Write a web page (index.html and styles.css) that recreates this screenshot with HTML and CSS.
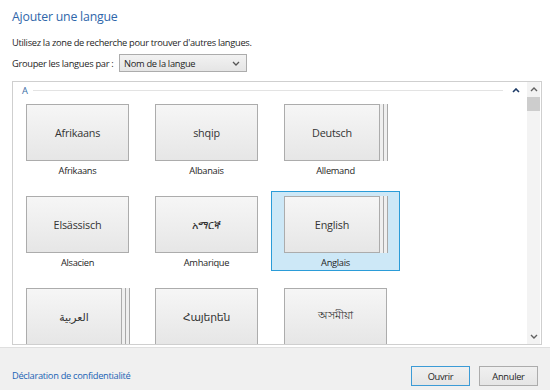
FILE: index.html
```html
<!DOCTYPE html>
<html lang="fr">
  <head>
    <meta charset="UTF-8" />
    <title>Ajouter une langue</title>
    <link rel="stylesheet" href="styles.css">
  </head>
  <body>
    <div class="dialog">
      <h1 class="title">Ajouter une langue</h1>
      <p class="hint">Utilisez la zone de recherche pour trouver d'autres langues.</p>

      <div class="group-by">
        <span class="group-label">Grouper les langues par :</span>
        <div class="select">
          <span>Nom de la langue</span>
          <svg width="8" height="5" viewBox="0 0 8 5"><path d="M1 1 L4 4 L7 1" fill="none" stroke="#555" stroke-width="1.3"/></svg>
        </div>
      </div>

      <div class="list">
        <div class="list-body">
          <div class="group-head">
            <span class="group-letter">A</span>
            <span class="rule"></span>
            <svg class="collapse" width="8" height="5" viewBox="0 0 8 5"><path d="M1 4 L4 1 L7 4" fill="none" stroke="#1c3a66" stroke-width="1.6"/></svg>
          </div>

          <div class="grid">
            <div class="cell">
              <div class="tile">Afrikaans</div>
              <div class="name">Afrikaans</div>
            </div>
            <div class="cell">
              <div class="tile">shqip</div>
              <div class="name">Albanais</div>
            </div>
            <div class="cell">
              <div class="tile stacked">Deutsch</div>
              <div class="name">Allemand</div>
            </div>
            <div class="cell">
              <div class="tile">Elsässisch</div>
              <div class="name">Alsacien</div>
            </div>
            <div class="cell">
              <div class="tile">አማርኛ</div>
              <div class="name">Amharique</div>
            </div>
            <div class="cell selected">
              <div class="tile stacked">English</div>
              <div class="name">Anglais</div>
            </div>
            <div class="cell">
              <div class="tile stacked">العربية</div>
            </div>
            <div class="cell">
              <div class="tile">Հայերեն</div>
            </div>
            <div class="cell">
              <div class="tile">অসমীয়া</div>
            </div>
          </div>
        </div>

        <div class="scrollbar">
          <svg width="8" height="5" viewBox="0 0 8 5"><path d="M1 4 L4 1 L7 4" fill="none" stroke="#606060" stroke-width="1.4"/></svg>
          <div class="thumb"></div>
          <div class="track"></div>
          <svg width="8" height="5" viewBox="0 0 8 5"><path d="M1 1 L4 4 L7 1" fill="none" stroke="#606060" stroke-width="1.4"/></svg>
        </div>
      </div>
    </div>

    <div class="footer">
      <a class="privacy" href="#">Déclaration de confidentialité</a>
      <div class="buttons">
        <button class="btn default">Ouvrir</button>
        <button class="btn">Annuler</button>
      </div>
    </div>
  </body>
</html>
```

FILE: styles.css
```css
* {
  box-sizing: border-box;
}
body {
  margin: 0;
  font-family: "Open Sans", "Noto Sans", "DejaVu Sans", sans-serif;
  font-size: 9.3px;
  letter-spacing: -0.3px;
  color: #1e1e1e;
  background: #fff;
}
.dialog {
  padding: 7px 9px 0 12px;
  height: 347px;
}
.title {
  margin: 0;
  font-size: 12.3px;
  font-weight: normal;
  line-height: 20px;
  letter-spacing: -0.2px;
  color: #2f66aa;
}
.hint {
  margin: 8px 0 0;
  line-height: 15px;
}
.group-by {
  display: flex;
  align-items: center;
  margin-top: 4px;
  height: 18px;
}
.group-label {
  flex-shrink: 0;
  width: 107px;
  white-space: nowrap;
}
.select {
  display: flex;
  align-items: center;
  justify-content: space-between;
  width: 128px;
  height: 18px;
  padding: 0 6px 0 4px;
  border: 1px solid #acacac;
  background: linear-gradient(#f2f2f2, #e5e5e5);
}
.list {
  display: flex;
  margin-top: 9px;
  width: 530px;
  height: 264px;
  border: 1px solid #cfcfcf;
  overflow: hidden;
}
.list-body {
  flex: 1;
  overflow: hidden;
}
.group-head {
  display: flex;
  align-items: center;
  height: 14px;
  margin-top: 1px;
  padding: 0 7px 0 9px;
  gap: 5px;
}
.group-letter {
  color: #3b6ea6;
}
.rule {
  flex: 1;
  height: 1px;
  background: #e3e3e3;
  margin-right: 4px;
}
.grid {
  display: grid;
  grid-template-columns: repeat(3, 129px);
  row-gap: 12px;
  margin-top: 2px;
}
.cell {
  height: 80px;
  padding: 4px 0 0 12px;
  border: 1px solid transparent;
}
.cell.selected {
  background: #cde8f7;
  border-color: #2b9cd8;
}
.tile {
  display: flex;
  align-items: center;
  justify-content: center;
  width: 103px;
  height: 57px;
  border: 1px solid #acacac;
  background: linear-gradient(#f6f6f6, #e6e6e6);
  color: #333;
  font-size: 10.8px;
  letter-spacing: -0.2px;
}
.tile.stacked {
  width: 96px;
  box-shadow: 3px 0 0 #efefef, 4px 0 0 #a8a8a8, 7px 0 0 #efefef, 8px 0 0 #a8a8a8;
}
.name {
  width: 103px;
  margin-top: 3px;
  line-height: 14px;
  text-align: center;
}
.scrollbar {
  display: flex;
  flex-direction: column;
  align-items: center;
  width: 13px;
  margin-right: 1px;
  background: #f3f3f3;
}
.scrollbar svg {
  margin: 5px 0;
}
.thumb {
  width: 13px;
  height: 14px;
  background: #cdcdcd;
}
.track {
  flex: 1;
}
.footer {
  display: flex;
  align-items: flex-start;
  justify-content: space-between;
  height: 43px;
  padding: 18px 12px 0;
  border-top: 1px solid #dfdfdf;
  background: #f0f0f0;
}
.privacy {
  line-height: 20px;
  color: #1a63b5;
  text-decoration: none;
}
.buttons {
  display: flex;
  gap: 9px;
}
.btn {
  width: 59px;
  height: 20px;
  padding: 0;
  border: 1px solid #acacac;
  background: linear-gradient(#f0f0f0, #e5e5e5);
  font-family: inherit;
  font-size: 9.3px;
  letter-spacing: -0.3px;
  color: #1e1e1e;
}
.btn.default {
  border-color: #3c9bd6;
}
```
